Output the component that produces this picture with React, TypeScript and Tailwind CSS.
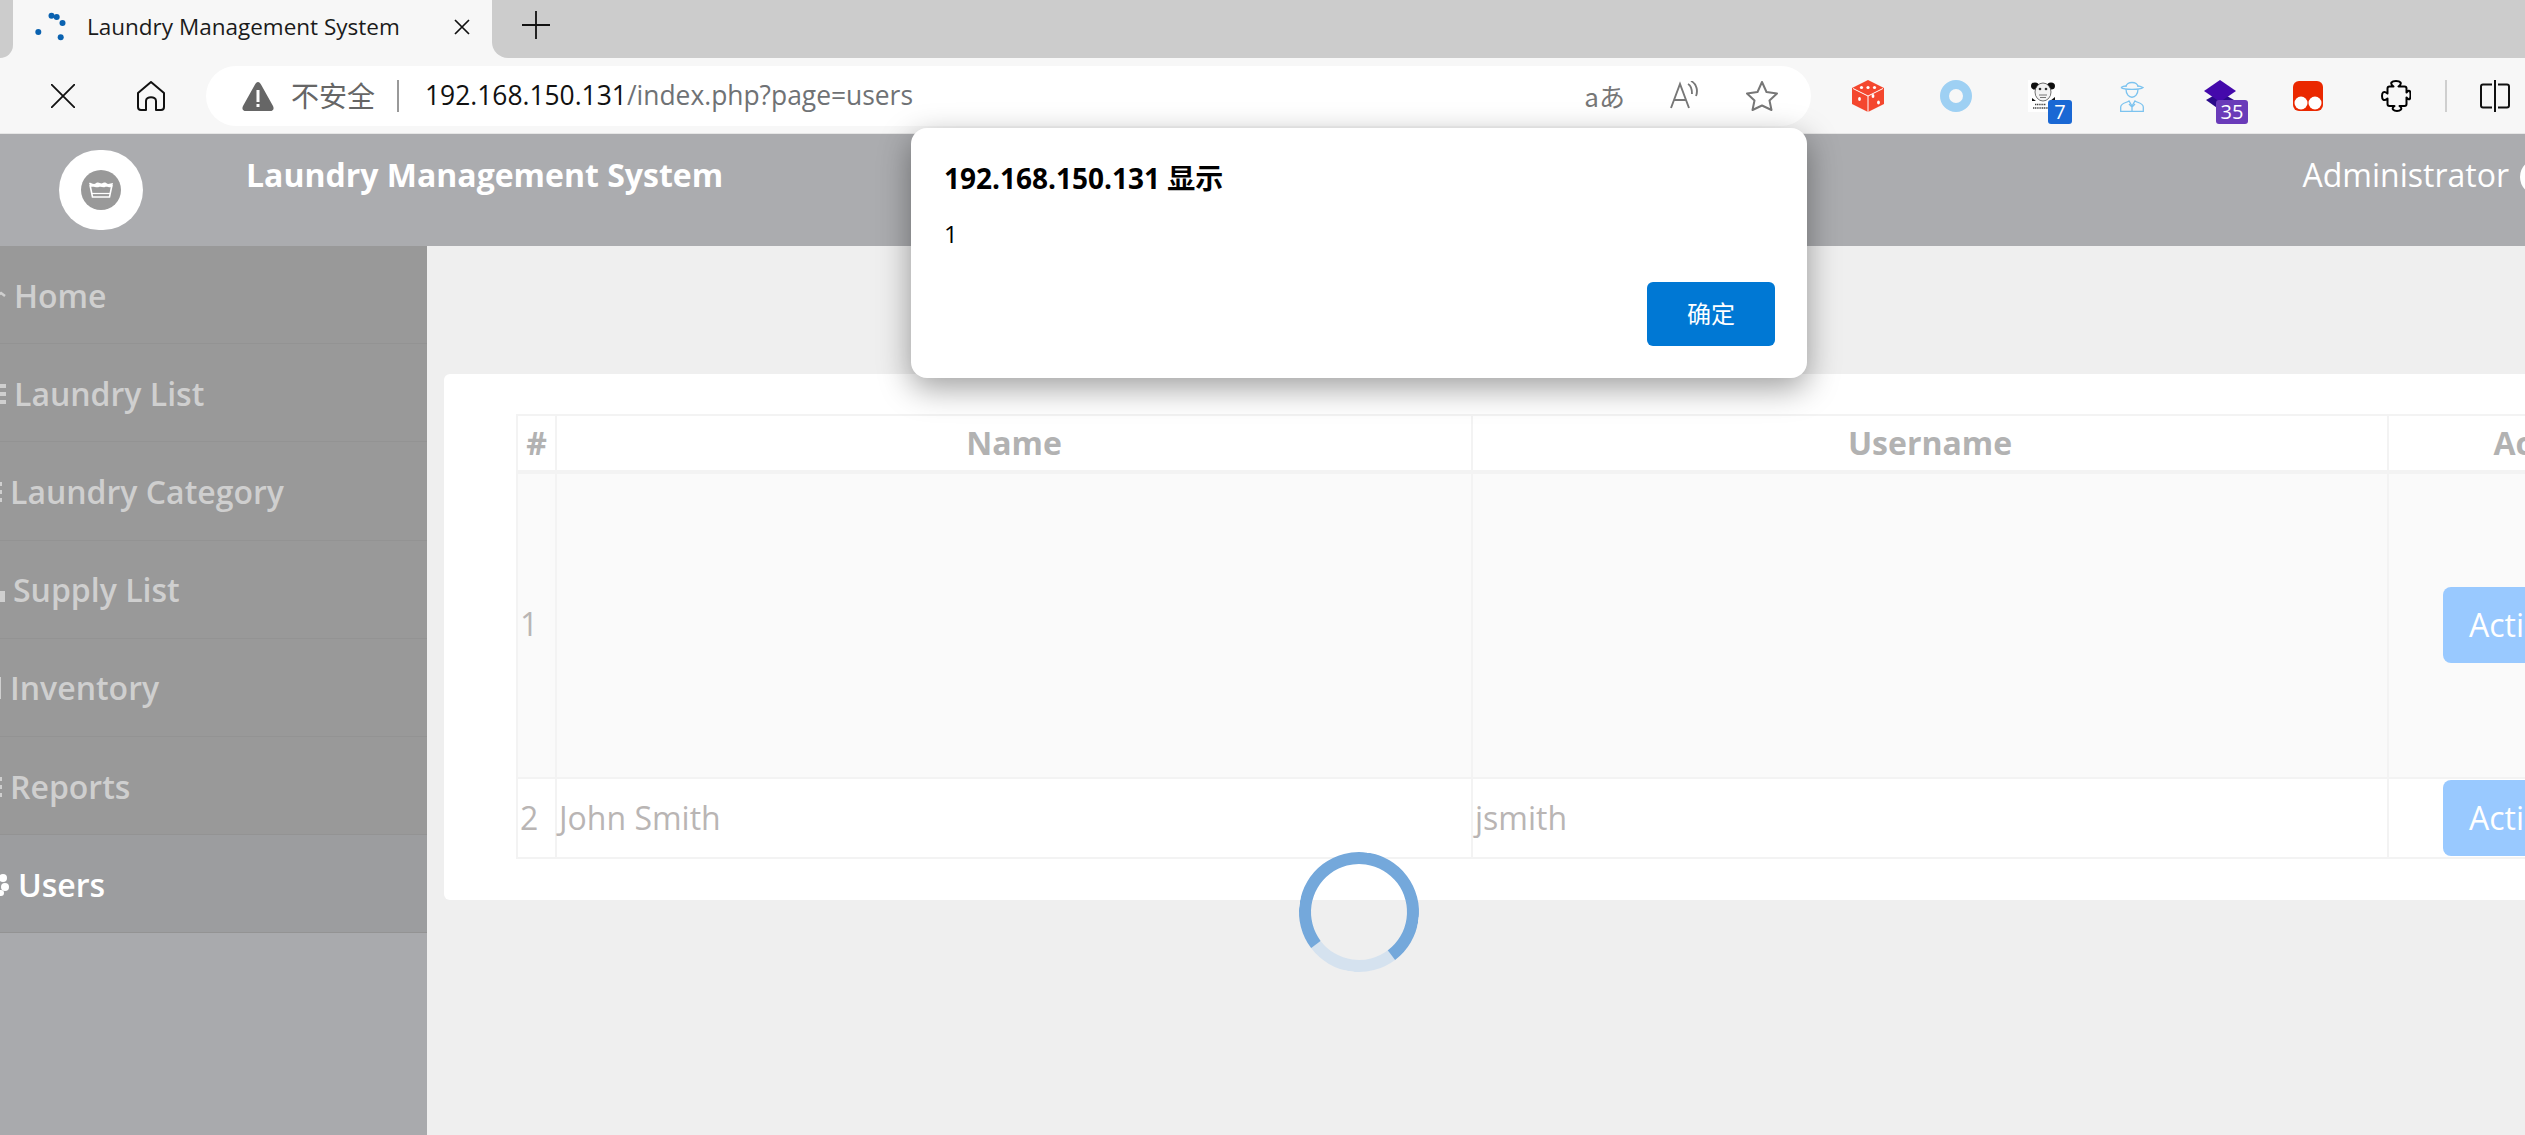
import React from 'react';
import { ReactNode } from 'react';

const sansFont = 'font-["Open_Sans","Noto_Sans_CJK_SC",sans-serif]';

// Left edge of each sidebar icon is scrolled out of view, only a sliver shows
const StripeIcon = ({ width, visible }: { width: number; visible: number }) => (
  <svg width={width} height="24" viewBox={`0 0 ${width} 24`} className="shrink-0">
    <rect x="-4" y="2" width={visible + 4} height="4" fill="#cfcfcf" />
    <rect x="-4" y="10" width={visible + 4} height="4" fill="#cfcfcf" />
    <rect x="-4" y="18" width={visible + 4} height="4" fill="#cfcfcf" />
  </svg>
);

const navItems: { label: string; icon: ReactNode; active?: boolean }[] = [
  {
    label: 'Home',
    icon: (
      <svg width="14" height="24" viewBox="0 0 14 24" className="shrink-0">
        <path d="M-2 11 L1 9 L5 12" fill="none" stroke="#cfcfcf" strokeWidth="2.5" />
      </svg>
    ),
  },
  { label: 'Laundry List', icon: <StripeIcon width={14} visible={6} /> },
  { label: 'Laundry Category', icon: <StripeIcon width={10} visible={2} /> },
  {
    label: 'Supply List',
    icon: (
      <svg width="13" height="30" viewBox="0 0 13 30" className="shrink-0">
        <rect x="-4" y="16" width="9" height="11" fill="#cfcfcf" />
      </svg>
    ),
  },
  {
    label: 'Inventory',
    icon: (
      <svg width="10" height="26" viewBox="0 0 10 26" className="shrink-0">
        <rect x="-2" y="2" width="3" height="22" fill="#cfcfcf" />
      </svg>
    ),
  },
  { label: 'Reports', icon: <StripeIcon width={10} visible={2} /> },
  {
    label: 'Users',
    active: true,
    icon: (
      <svg width="18" height="26" viewBox="0 0 18 26" className="shrink-0">
        <circle cx="3" cy="6" r="4" fill="#fff" />
        <circle cx="5" cy="15" r="4" fill="#fff" />
        <rect x="-3" y="18" width="7" height="6" rx="3" fill="#fff" />
      </svg>
    ),
  },
];

const Dice = () => (
  <svg width="32" height="32" viewBox="0 0 32 32">
    <path d="M16 0 L32 8 V24 L16 32 L0 24 V8 Z" fill="#f4472e" />
    <path d="M1 8.500 L16 16 L31 8.500 M16 16 V32" fill="none" stroke="#fff" strokeWidth="1" />
    <circle cx="9.500" cy="7.500" r="1.600" fill="#fff" />
    <circle cx="16" cy="7.500" r="1.600" fill="#fff" />
    <circle cx="22.500" cy="7.500" r="1.600" fill="#fff" />
    <ellipse cx="7.500" cy="19" rx="1.400" ry="2" fill="#fff" />
    <ellipse cx="21" cy="16" rx="1.400" ry="2" fill="#fff" />
    <ellipse cx="26.500" cy="22.500" rx="1.400" ry="2" fill="#fff" />
  </svg>
);

const Ring = () => (
  <svg width="32" height="32" viewBox="0 0 32 32">
    <circle cx="16" cy="16" r="11.500" fill="none" stroke="#9ed0f3" strokeWidth="9" />
  </svg>
);

const Panda = () => (
  <svg width="32" height="32" viewBox="0 0 32 32">
    <rect width="32" height="32" fill="#fff" />
    <ellipse cx="7" cy="6" rx="4" ry="3.500" fill="#111" />
    <ellipse cx="23" cy="6" rx="4" ry="3.500" fill="#111" />
    <path d="M4 18 L8 21 H22 L27 17 V21 H4 Z" fill="#111" />
    <ellipse cx="15" cy="12" rx="8" ry="9" fill="#f4f4f4" stroke="#333" strokeWidth="0.700" />
    <circle cx="12" cy="9" r="1.300" fill="#333" />
    <circle cx="18" cy="9" r="1.300" fill="#333" />
    <path d="M11 15 H19 M12 17.500 H18" stroke="#555" strokeWidth="0.800" />
    <path d="M7 24.500 H18 M5 28 H20" stroke="#444" strokeWidth="1.400" strokeDasharray="1.200 0.600" />
  </svg>
);

const HatMan = () => (
  <svg width="24" height="32" viewBox="0 0 24 32" fill="none" stroke="#7cc3ef" strokeWidth="1.300">
    <path d="M6 7 C6 1 18 1 18 7" />
    <path d="M1 7.500 C4 10 20 10 23 7.500 C20 6 18 6 18 6 M6 6 C5 6 3 6 1 7.500" />
    <path d="M6 9 C6 20 18 20 18 9" />
    <path d="M0.700 31.300 V27 C1 23 6 23 9 21 L12 26 L15 21 C18 23 23 23 23.300 27 V31.300 Z" />
    <path d="M9 24 L12 27 L15 24 M12 27 V31" />
  </svg>
);

const Diamond = () => (
  <svg width="32" height="32" viewBox="0 0 32 32">
    <path d="M16 12 L30 20 L16 30 L2 20 Z" fill="#2a0a8a" />
    <path d="M16 0 L32 11 L16 22 L0 11 Z" fill="#4409ab" />
  </svg>
);

const Tampermonkey = () => (
  <svg width="30" height="30" viewBox="0 0 30 30">
    <rect width="30" height="30" rx="6" fill="#ea2800" />
    <circle cx="8" cy="22" r="6.500" fill="#fff" />
    <circle cx="22" cy="22" r="6.500" fill="#fff" />
  </svg>
);

const PuzzlePiece = () => (
  <svg width="30" height="32" viewBox="0 0 30 32" fill="none" stroke="#000" strokeWidth="2" strokeLinejoin="round">
    <path d="M12.500 6.500 C8 3 11 1 15 1 C19 1 22 3 17.500 6.500 H23.500 C25 6.500 25.500 7 25.500 8.500 V12.500 C29 8.500 29.500 12 29.500 15 C29.500 18 29 21.500 25.500 17.500 V24 C25.500 25.500 25 26 23.500 26 H18.500 C22.500 29 19 31 16 31 C13 31 9.500 29 13.500 26 H8.500 C7 26 6.500 25.500 6.500 24 V18.500 C2.500 22 1 19 1 16 C1 13 2.500 10 6.500 13.500 V8.500 C6.500 7 7 6.500 8.500 6.500 Z" />
  </svg>
);

const Badge = ({ text, className }: { text: string; className: string }) => (
  <span className={`absolute top-[20px] h-[24px] rounded-[3px] flex items-center justify-center text-white text-[20px] leading-none ${className}`}>
    {text}
  </span>
);

const thClass = 'border-2 border-[#f3f3f3] border-b-4 font-bold text-[32px] text-[#b2b2b2] text-center p-0 leading-none';
const tdClass = 'border-2 border-[#f3f3f3] text-[32px] text-[#b9b5b4] px-[2px] align-middle leading-none';

const ActionButton = ({ className }: { className: string }) => (
  <button className={`h-[76px] px-[26px] rounded-[8px] bg-[#99c9ff] text-white text-[32px] ml-[54px] block ${className}`}>
    Action
  </button>
);

export default function App() {
  return (
    <div className={`relative w-[2525px] h-[1135px] overflow-hidden bg-[#efefef] flex flex-col ${sansFont}`}>
      {/* Browser tab strip */}
      <div className="h-[58px] flex shrink-0 bg-[#f7f7f7]">
        <div className="w-[13px] bg-[#cccccc] rounded-br-[16px]" />
        <div className="w-[479px] flex items-center pl-[19px] pb-[4px] text-[#1b1b1b]">
          <svg width="36" height="32" viewBox="32 8 36 32" className="shrink-0">
            <circle cx="51.500" cy="12.700" r="3" fill="#0a62b0" />
            <circle cx="56.700" cy="14" r="3" fill="#0a62b0" />
            <circle cx="62.500" cy="20" r="3" fill="#0a62b0" />
            <circle cx="60.700" cy="34.300" r="3" fill="#0a62b0" />
            <circle cx="38.300" cy="29" r="3" fill="#0a62b0" />
          </svg>
          <span className="ml-[19px] text-[22.500px] whitespace-nowrap">Laundry Management System</span>
          <svg width="16" height="16" viewBox="0 0 16 16" className="ml-auto mr-[22px] shrink-0" stroke="#111" strokeWidth="1.700">
            <path d="M1 1 L15 15 M15 1 L1 15" />
          </svg>
        </div>
        <div className="flex-1 bg-[#cccccc] rounded-bl-[16px] flex items-center pl-[30px] pb-[8px]">
          <svg width="28" height="28" viewBox="0 0 28 28" stroke="#111" strokeWidth="1.800">
            <path d="M14 0 V28 M0 14 H28" />
          </svg>
        </div>
      </div>

      {/* Browser toolbar */}
      <div className="h-[76px] shrink-0 bg-[#f7f7f7] flex items-center border-b border-[#e6e6e6] pt-[1px]">
        <svg width="24" height="24" viewBox="0 0 24 24" className="ml-[51px] shrink-0" stroke="#111" strokeWidth="1.800">
          <path d="M0 0 L24 24 M24 0 L0 24" />
        </svg>
        <svg width="30" height="30" viewBox="0 0 30 30" className="ml-[61px] shrink-0" fill="none" stroke="#111" strokeWidth="2" strokeLinejoin="round">
          <path d="M15 1 L28 12 V26 C28 28 27 29 25 29 H20 V20 C20 15 10 15 10 20 V29 H5 C3 29 2 28 2 26 V12 Z" />
        </svg>
        <div className="ml-[40px] w-[1605px] h-[60px] bg-white rounded-[30px] flex items-center shrink-0">
          <svg width="32" height="30" viewBox="0 0 32 30" className="ml-[36px] shrink-0">
            <path d="M16 1 C17.500 1 18 2 19 3.500 L31 25 C32.500 28 31 30 28 30 H4 C1 30 -0.500 28 1 25 L13 3.500 C14 2 14.500 1 16 1 Z" fill="#666" />
            <rect x="14.500" y="9" width="3" height="12" fill="#fff" />
            <rect x="14.500" y="23" width="3" height="3" fill="#fff" />
          </svg>
          <span className="ml-[17px] text-[28px] text-[#666] whitespace-nowrap">不安全</span>
          <span className="ml-[22px] w-[2px] h-[32px] bg-[#999] shrink-0" />
          <span className="ml-[26px] text-[26.400px] whitespace-nowrap text-[#111]">
            192.168.150.131<span className="text-[#6f7275]">/index.php?page=users</span>
          </span>
          <span className="ml-auto text-[#777] text-[26px] leading-none whitespace-nowrap font-['Noto_Sans_CJK_SC',sans-serif]">aあ</span>
          <svg width="32" height="30" viewBox="0 0 32 30" className="ml-[45px] shrink-0" fill="none" stroke="#777" strokeWidth="1.900">
            <path d="M1 27 L10 3 L19 27 M4 19 H16" />
            <path d="M18 3 C22 5 22 10 22 13 M21 0 C27 3 28 10 26 15" />
          </svg>
          <svg width="32" height="30" viewBox="0 0 32 30" className="ml-[44px] mr-[33px] shrink-0" fill="none" stroke="#777" strokeWidth="2" strokeLinejoin="round">
            <path d="M16 1 L20.500 11 L31 12.500 L23.500 19.500 L25.500 29 L16 24.500 L6.500 29 L8.500 19.500 L1 12.500 L11.500 11 Z" />
          </svg>
        </div>
        <div className="ml-[41px] flex items-center gap-[56px] relative shrink-0">
          <Dice />
          <Ring />
          <Panda />
          <div className="w-[32px] flex justify-center"><HatMan /></div>
          <Diamond />
          <div className="w-[32px] flex justify-center"><Tampermonkey /></div>
          <div className="w-[32px] flex justify-center"><PuzzlePiece /></div>
          <Badge text="7" className="left-[196px] w-[24px] bg-[#1a68d4]" />
          <Badge text="35" className="left-[364px] w-[32px] bg-[#6a3bb9]" />
        </div>
        <span className="ml-[33px] w-[2px] h-[32px] bg-[#cfcfcf] shrink-0" />
        <svg width="30" height="32" viewBox="0 0 30 32" className="ml-[33px] shrink-0" fill="none" stroke="#111" strokeWidth="2">
          <path d="M12 4.500 H3 C2 4.500 1 5.500 1 6.500 V25.500 C1 26.500 2 27.500 3 27.500 H12 M18 4.500 H27 C28 4.500 29 5.500 29 6.500 V25.500 C29 26.500 28 27.500 27 27.500 H18 M15 0 V32" />
        </svg>
      </div>

      {/* App header */}
      <header className="h-[112px] shrink-0 bg-[#abacaf] flex relative">
        <div className="ml-[59px] mt-[16px] w-[84px] h-[80px] rounded-full bg-white flex items-center justify-center shrink-0">
          <div className="w-[40px] h-[40px] rounded-full bg-[#999] flex items-center justify-center">
            <svg width="24" height="16" viewBox="0 0 24 16">
              <path d="M0 1 C2 0 3 2 5 2 C7 2 7 0 9 0.500 C11 1 12 2 14 1 C16 0 17 1 19 2 C21 2 22 1 24 1 L23 5 C20 6 18 4 16 5 C14 6 12 4 10 5 C7 6 5 4 1.500 5 Z" fill="#fff" />
              <path d="M1 3 L3.500 15 H20.500 L23 3" fill="none" stroke="#fff" strokeWidth="1.600" />
              <path d="M3 11.500 H21" stroke="#fff" strokeWidth="1.200" />
            </svg>
          </div>
        </div>
        <h1 className="ml-[103px] mt-[21px] h-[40px] text-[32px] leading-[40px] font-bold text-white whitespace-nowrap">
          Laundry Management System
        </h1>
        <span className="ml-auto mt-[21px] h-[40px] text-[32px] leading-[40px] text-white whitespace-nowrap">Administrator</span>
        <span className="ml-[11px] -mr-[31px] mt-[25px] w-[36px] h-[36px] rounded-full border-[8px] border-white shrink-0" />
      </header>

      {/* Sidebar + main content */}
      <div className="flex flex-1 min-h-0">
        <nav className="w-[427px] shrink-0 bg-[#a9aaad] flex flex-col">
          {navItems.map((item) => (
            <div
              key={item.label}
              className={`h-[98.200px] shrink-0 flex items-center pt-[2px] border-b border-[#939393] text-[32px] font-semibold whitespace-nowrap ${
                item.active ? 'bg-[#9c9d9f] text-white' : 'bg-[#999999] text-[#cfcfcf]'
              }`}
            >
              {item.icon}
              <span>{item.label}</span>
            </div>
          ))}
        </nav>
        <main className="flex-1 min-w-0 pl-[17px] pt-[128px] overflow-hidden">
          <div className="w-[2330px] h-[526px] bg-white rounded-[6px] pl-[72px] pt-[40px]">
            <table className="border-collapse table-fixed w-[2185px]">
              <thead>
                <tr className="h-[57px]">
                  <th className={`${thClass} w-[39px]`}>#</th>
                  <th className={`${thClass} w-[916px]`}>Name</th>
                  <th className={`${thClass} w-[916px]`}>Username</th>
                  <th className={`${thClass} w-[314px]`}>Action</th>
                </tr>
              </thead>
              <tbody>
                <tr className="h-[306px] bg-[#fafafa]">
                  <td className={`${tdClass} pb-[4px]`}>1</td>
                  <td className={tdClass} />
                  <td className={tdClass} />
                  <td className={`${tdClass} !p-0`}><ActionButton className="-mt-[2px]" /></td>
                </tr>
                <tr className="h-[80px] bg-white">
                  <td className={tdClass}>2</td>
                  <td className={tdClass}>John Smith</td>
                  <td className={tdClass}>jsmith</td>
                  <td className={`${tdClass} !p-0`}><ActionButton className="mt-0" /></td>
                </tr>
              </tbody>
            </table>
          </div>
        </main>
      </div>

      {/* Loading spinner */}
      <div className="absolute left-[1299px] top-[852px] w-[120px] h-[120px] rounded-full border-[12px] border-[#74a8db] border-b-[#d5e2ef] rotate-[8deg]" />

      {/* Native alert dialog */}
      <div className="absolute left-[911px] top-[128px] w-[896px] h-[250px] rounded-[16px] bg-white shadow-[0_10px_32px_rgba(0,0,0,0.38)] px-[33px] flex flex-col">
        <div className="mt-[34px] h-[32px] text-[28px] leading-[32px] font-bold text-black whitespace-nowrap">192.168.150.131 显示</div>
        <div className="mt-[25px] h-[30px] text-[24px] leading-[30px] text-black">1</div>
        <button className="absolute right-[32px] top-[154px] w-[128px] h-[64px] rounded-[6px] bg-[#0078d4] text-white text-[24px]">确定</button>
      </div>
    </div>
  );
}
